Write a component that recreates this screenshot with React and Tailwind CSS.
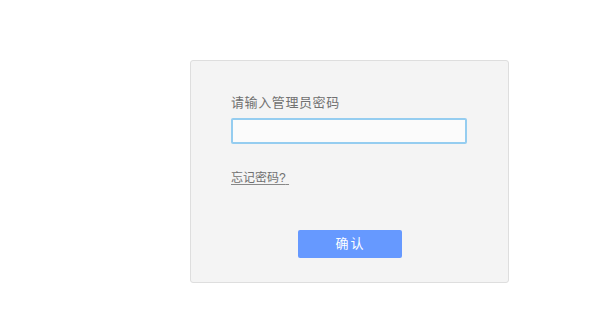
export default function App() {
  const font = { fontFamily: '"Liberation Sans", "Noto Sans CJK SC", sans-serif' };
  return (
    <div className="w-[600px] h-[316px] bg-white pt-[60px] pl-[190px]" style={font}>
      <div className="w-[319px] h-[223px] bg-[#f4f4f4] border border-[#dedede] rounded-[3px] pl-[40px] pr-[40px] pt-[33px] flex flex-col">
        <div className="text-[13px] leading-[18px] text-[#707070] tracking-[0.6px]">请输入管理员密码</div>
        <input
          type="password"
          className="mt-[6px] w-[236px] h-[26px] bg-[#fbfbfb] border-2 border-[#95cdf0] rounded-[2px] outline-none"
        />
        <a href="#" className="mt-[26px] self-start text-[12px] leading-[16px] text-[#707070] underline underline-offset-2 decoration-[#888]">
          忘记密码?{"\u00a0"}
        </a>
        <div className="mt-[44px] flex justify-center w-[237px]">
          <button className="w-[104px] h-[28px] bg-[#6699ff] rounded-[2px] text-white text-[13px] tracking-[2px] pl-[2px]">
            确认
          </button>
        </div>
      </div>
    </div>
  );
}
